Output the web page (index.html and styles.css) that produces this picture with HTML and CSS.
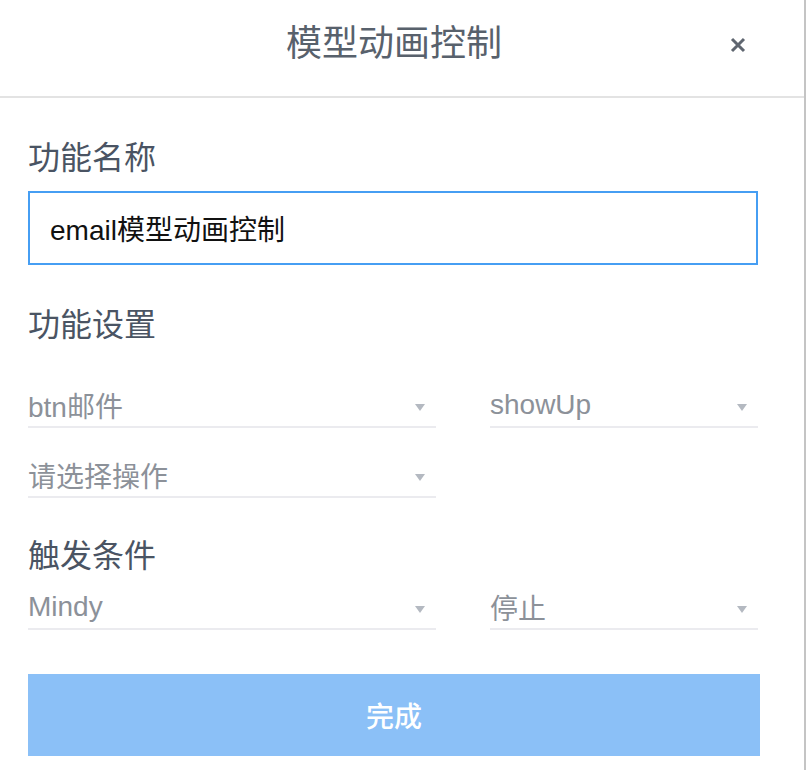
FILE: index.html
```html
<!DOCTYPE html>
<html lang="zh">
<head>
<meta charset="utf-8">
<title>模型动画控制</title>
<link rel="stylesheet" href="styles.css">
</head>
<body>
<div class="panel">
  <header class="header">
    <h1 class="title">模型动画控制</h1>
    <button class="close" aria-label="关闭">
      <svg width="16" height="16" viewBox="0 0 16 16"><path d="M2 2L14 14M14 2L2 14" stroke="#5f6670" stroke-width="3" stroke-linecap="butt"/></svg>
    </button>
  </header>
  <main class="content">
    <div class="label label-first">功能名称</div>
    <div class="input">email模型动画控制</div>

    <div class="label label-second">功能设置</div>
    <div class="row row-a">
      <div class="select"><span>btn邮件</span><i class="arrow"></i></div>
      <div class="select"><span>showUp</span><i class="arrow"></i></div>
    </div>
    <div class="row row-b">
      <div class="select"><span>请选择操作</span><i class="arrow"></i></div>
    </div>

    <div class="label label-third">触发条件</div>
    <div class="row row-c">
      <div class="select"><span>Mindy</span><i class="arrow"></i></div>
      <div class="select"><span>停止</span><i class="arrow"></i></div>
    </div>

    <button class="done">完成</button>
  </main>
</div>
</body>
</html>
```
FILE: styles.css
```css
* { box-sizing: border-box; }
html, body { margin: 0; padding: 0; background: #fff; }
body {
  font-family: "Liberation Sans", "Noto Sans CJK SC", sans-serif;
  width: 806px;
  height: 770px;
  overflow: hidden;
}
.panel {
  width: 806px;
  height: 770px;
  border-right: 2px solid #c4c4c4;
}
.header {
  height: 98px;
  border-bottom: 2px solid #e3e3e3;
  display: flex;
  align-items: center;
  justify-content: center;
  position: relative;
}
.title {
  margin: 0;
  font-size: 36px;
  font-weight: 400;
  color: #58616c;
  line-height: 1;
  margin-left: -16px;
  margin-top: -8px;
}
.close {
  position: absolute;
  right: 58px;
  top: 37px;
  width: 16px;
  height: 16px;
  padding: 0;
  border: 0;
  background: none;
  display: block;
}
.close svg { display: block; }
.content {
  padding: 0 46px 0 28px;
  display: flex;
  flex-direction: column;
}
.label {
  font-size: 32px;
  line-height: 40px;
  height: 40px;
  color: #4a5463;
}
.label-first { margin-top: 40px; }
.label-second { margin-top: 40px; }
.label-third { margin-top: 38px; }
.input {
  margin-top: 13px;
  height: 74px;
  border: 2px solid #469ef3;
  padding-left: 20px;
  display: flex;
  align-items: center;
  font-size: 28px;
  color: #111;
}
.row {
  display: grid;
  grid-template-columns: 408px 268px;
  column-gap: 54px;
}
.row-a { margin-top: 39px; }
.row-b { margin-top: 26px; }
.row-c { margin-top: 10px; }
.select {
  height: 44px;
  border-bottom: 2px solid #ebebef;
  display: flex;
  align-items: center;
  justify-content: space-between;
  font-size: 28px;
  color: #8c9199;
  padding-right: 11px;
}
.arrow {
  display: block;
  width: 0;
  height: 0;
  border-left: 5px solid transparent;
  border-right: 5px solid transparent;
  border-top: 7px solid #b4b9c1;
  margin-top: 4px;
}
.done {
  margin-top: 44px;
  width: 732px;
  height: 82px;
  border: 0;
  background: #8bc0f7;
  color: #fff;
  font-family: "Liberation Sans", "Noto Sans CJK SC", sans-serif;
  font-size: 28px;
  font-weight: 500;
  padding: 0;
}
```
